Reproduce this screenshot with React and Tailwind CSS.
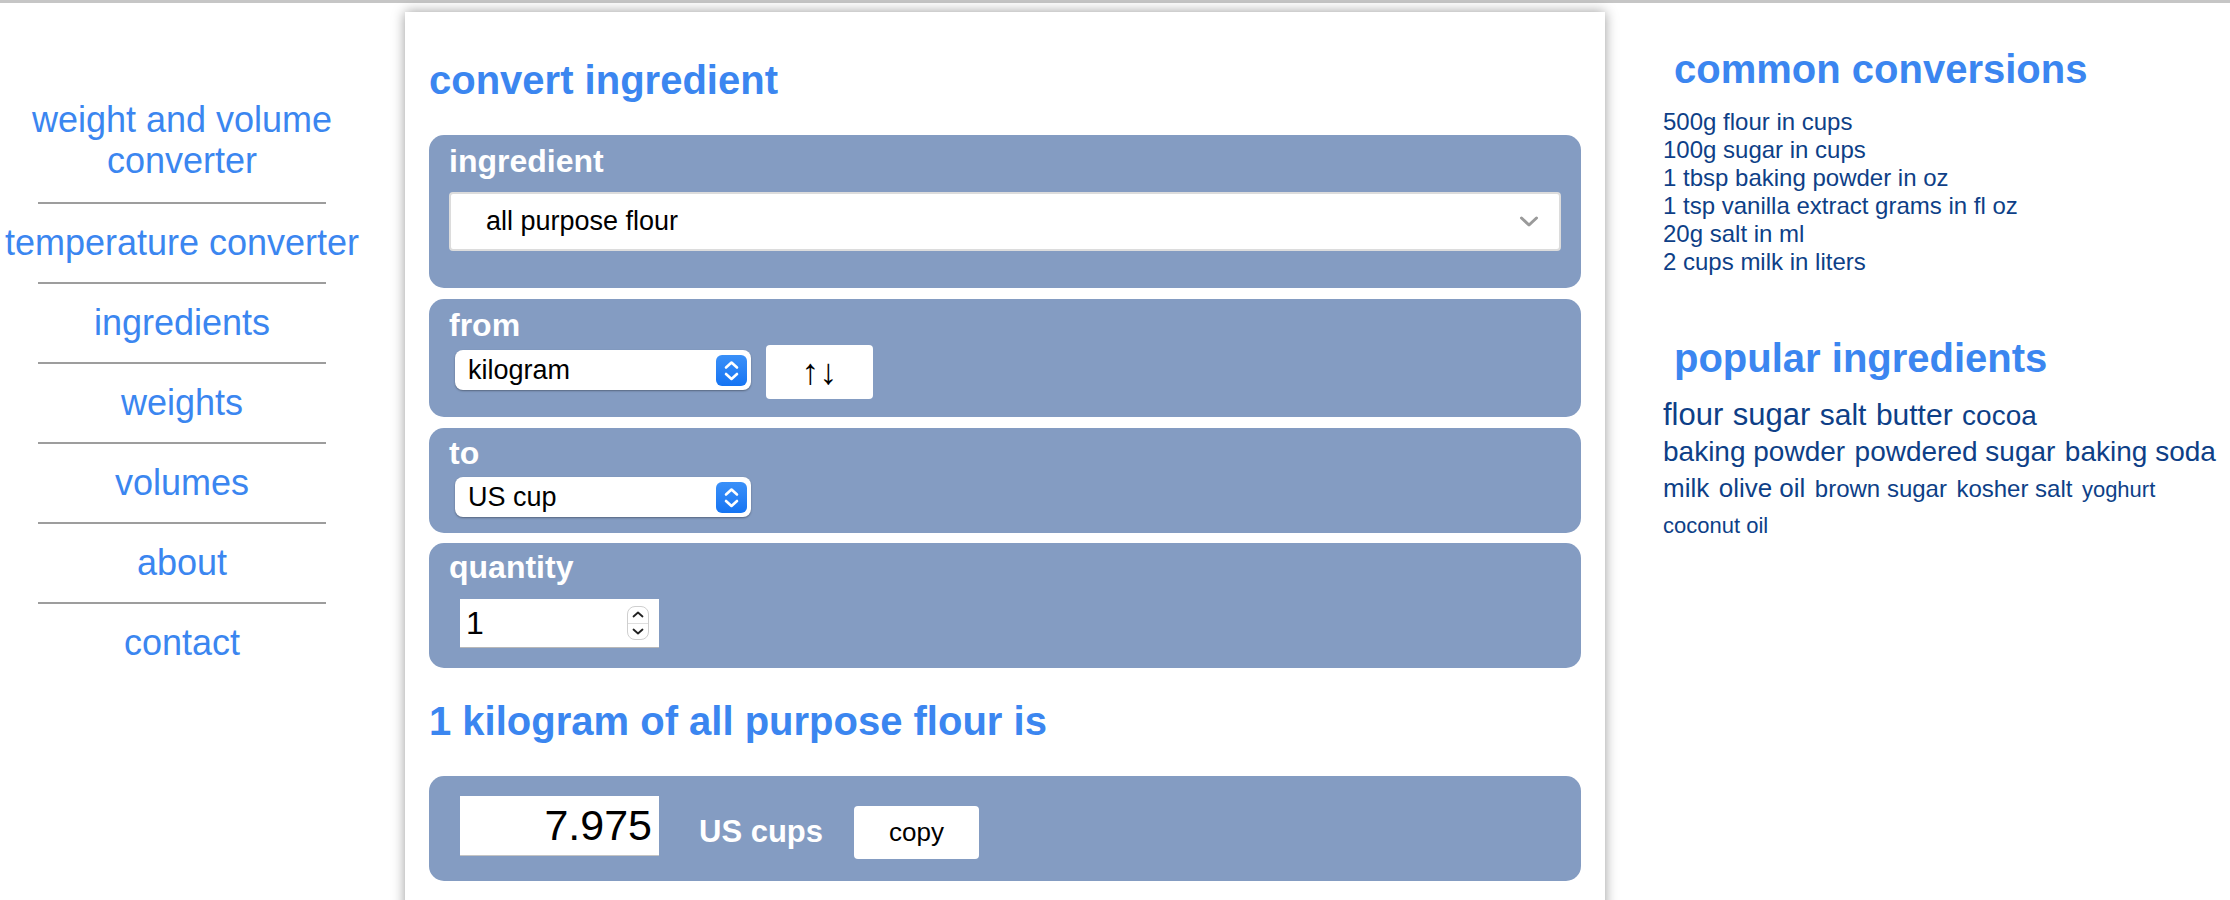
import React from 'react';

const navItems = [
  'weight and volume converter',
  'temperature converter',
  'ingredients',
  'weights',
  'volumes',
  'about',
  'contact',
];

const commonConversions = [
  '500g flour in cups',
  '100g sugar in cups',
  '1 tbsp baking powder in oz',
  '1 tsp vanilla extract grams in fl oz',
  '20g salt in ml',
  '2 cups milk in liters',
];

// tag cloud, size classes written out so tailwind picks them up
const popular = [
  { name: 'flour', cls: 'text-[31px]' },
  { name: 'sugar', cls: 'text-[31px]' },
  { name: 'salt', cls: 'text-[30px]' },
  { name: 'butter', cls: 'text-[30px]' },
  { name: 'cocoa', cls: 'text-[28px]' },
  { name: 'baking powder', cls: 'text-[28px]' },
  { name: 'powdered sugar', cls: 'text-[28px]' },
  { name: 'baking soda', cls: 'text-[28px]' },
  { name: 'milk', cls: 'text-[26px]' },
  { name: 'olive oil', cls: 'text-[26px]' },
  { name: 'brown sugar', cls: 'text-[24px]' },
  { name: 'kosher salt', cls: 'text-[24px]' },
  { name: 'yoghurt', cls: 'text-[22px]' },
  { name: 'coconut oil', cls: 'text-[22px]' },
];

const Stepper = () => (
  <div className="w-[31px] h-[31px] rounded-[6px] bg-gradient-to-b from-[#3a90f8] to-[#1474f3] flex items-center justify-center">
    <svg width="31" height="31" viewBox="0 0 31 31" fill="none" stroke="white" strokeWidth="2.6" strokeLinecap="round" strokeLinejoin="round">
      <path d="M10 12.5 L15.5 7.5 L21 12.5" />
      <path d="M10 19 L15.5 24 L21 19" />
    </svg>
  </div>
);

const UnitSelect = ({ value }) => (
  <div className="ml-[6px] mt-[5px] w-[296px] h-[40px] rounded-[8px] bg-white shadow-[0_1px_2px_rgba(0,0,0,0.35)] pl-[13px] pr-[4px] flex items-center justify-between">
    <span className="text-[27px] text-black leading-none">{value}</span>
    <Stepper />
  </div>
);

const Label = ({ children }) => (
  <div className="text-[32px] leading-[37px] font-bold text-white">{children}</div>
);

const App = () => {
  return (
    <div className="min-h-screen bg-white font-['Liberation_Sans',Arial,sans-serif]">
      <div className="h-[3px] bg-[#c6c6c6]" />
      <div className="flex items-start">
        {/* left nav */}
        <nav className="w-[364px] shrink-0 mt-[78px]">
          {navItems.map((item, i) => (
            <div key={item}>
              <div className={`pt-[18px] ${i === 0 ? 'pb-[21px]' : 'pb-[19px]'} text-center text-[36px] leading-[41px] text-[#3b86f0]`}>
                {item}
              </div>
              {i < navItems.length - 1 && (
                <div className="mx-[38px] border-t-2 border-[#9d9d9d]" />
              )}
            </div>
          ))}
        </nav>

        {/* converter */}
        <main className="ml-[41px] mt-[9px] w-[1200px] shrink-0 bg-white px-[24px] pt-[45px] pb-[60px] shadow-[0_0_12px_rgba(0,0,0,0.4)]">
          <h2 className="text-[40px] leading-[46px] font-bold text-[#3b86f0]">convert ingredient</h2>

          <div className="mt-[32px] rounded-[15px] bg-[#849cc2] px-[20px] pt-[8px] pb-[37px]">
            <Label>ingredient</Label>
            <div className="mt-[12px] h-[59px] bg-white border-2 border-[#dcdcdc] rounded-[4px] pl-[35px] pr-[20px] flex items-center justify-between">
              <span className="text-[27px] text-black">all purpose flour</span>
              <svg width="20" height="13" viewBox="0 0 20 13" fill="none" stroke="#9a9a9a" strokeWidth="3" strokeLinecap="round" strokeLinejoin="round">
                <path d="M2.5 3 L10 10 L17.5 3" />
              </svg>
            </div>
          </div>

          <div className="mt-[11px] rounded-[15px] bg-[#849cc2] px-[20px] pt-[8px] pb-[18px]">
            <Label>from</Label>
            <div className="mt-[1px] flex items-start">
              <UnitSelect value="kilogram" />
              <button className="ml-[15px] w-[107px] h-[54px] rounded-[4px] bg-white text-[36px] leading-none text-black flex items-center justify-center">
                ↑↓
              </button>
            </div>
          </div>

          <div className="mt-[11px] rounded-[15px] bg-[#849cc2] px-[20px] pt-[7px] pb-[16px]">
            <Label>to</Label>
            <div className="flex">
              <UnitSelect value="US cup" />
            </div>
          </div>

          <div className="mt-[10px] rounded-[15px] bg-[#849cc2] px-[20px] pt-[6px] pb-[20px]">
            <Label>quantity</Label>
            <div className="mt-[13px] ml-[11px] w-[199px] h-[49px] bg-white border-b border-[#b8b8b8] pl-[6px] pr-[10px] flex items-center justify-between">
              <span className="text-[32px] text-black">1</span>
              <div className="w-[22px] h-[34px] rounded-[8px] border border-[#cfcfcf] flex flex-col">
                <div className="flex-1 flex items-center justify-center border-b border-[#dedede]">
                  <svg width="12" height="7" viewBox="0 0 12 7" fill="none" stroke="#222" strokeWidth="1.8" strokeLinecap="round" strokeLinejoin="round">
                    <path d="M1.5 5.5 L6 1.5 L10.5 5.5" />
                  </svg>
                </div>
                <div className="flex-1 flex items-center justify-center">
                  <svg width="12" height="7" viewBox="0 0 12 7" fill="none" stroke="#222" strokeWidth="1.8" strokeLinecap="round" strokeLinejoin="round">
                    <path d="M1.5 1.5 L6 5.5 L10.5 1.5" />
                  </svg>
                </div>
              </div>
            </div>
          </div>

          <h2 className="mt-[30px] text-[40px] leading-[46px] font-bold text-[#3b86f0]">
            1 kilogram of all purpose flour is
          </h2>

          <div className="mt-[32px] rounded-[15px] bg-[#849cc2] px-[20px] pt-[20px] pb-[22px] flex items-start">
            <div className="ml-[11px] w-[199px] h-[60px] bg-white border-b border-[#c4c4c4] pr-[7px] flex items-center justify-end">
              <span className="text-[43px] text-black">7.975</span>
            </div>
            <div className="ml-[40px] mt-[19px] text-[31px] leading-[34px] font-bold text-white">US cups</div>
            <button className="ml-[31px] mt-[10px] w-[125px] h-[53px] rounded-[4px] bg-white text-[26px] text-black">
              copy
            </button>
          </div>
        </main>

        {/* right column */}
        <aside className="ml-[58px] mt-[43px] w-[558px] shrink-0">
          <h2 className="pl-[11px] text-[40px] leading-[46px] font-bold text-[#3b86f0]">common conversions</h2>
          <ul className="mt-[16px] text-[24px] leading-[28px] text-[#0e3f87]">
            {commonConversions.map(c => (
              <li key={c}>{c}</li>
            ))}
          </ul>

          <h2 className="mt-[59px] pl-[11px] text-[40px] leading-[46px] font-bold text-[#3b86f0]">popular ingredients</h2>
          <div className="mt-[14px] text-[34px] leading-[36px] text-[#0e3f87]">
            {popular.map((p, i) => (
              <React.Fragment key={p.name}>
                <span className={`${p.cls} leading-none whitespace-nowrap`}>{p.name}</span>
                {i < popular.length - 1 && ' '}
              </React.Fragment>
            ))}
          </div>
        </aside>
      </div>
    </div>
  );
};

export default App;
